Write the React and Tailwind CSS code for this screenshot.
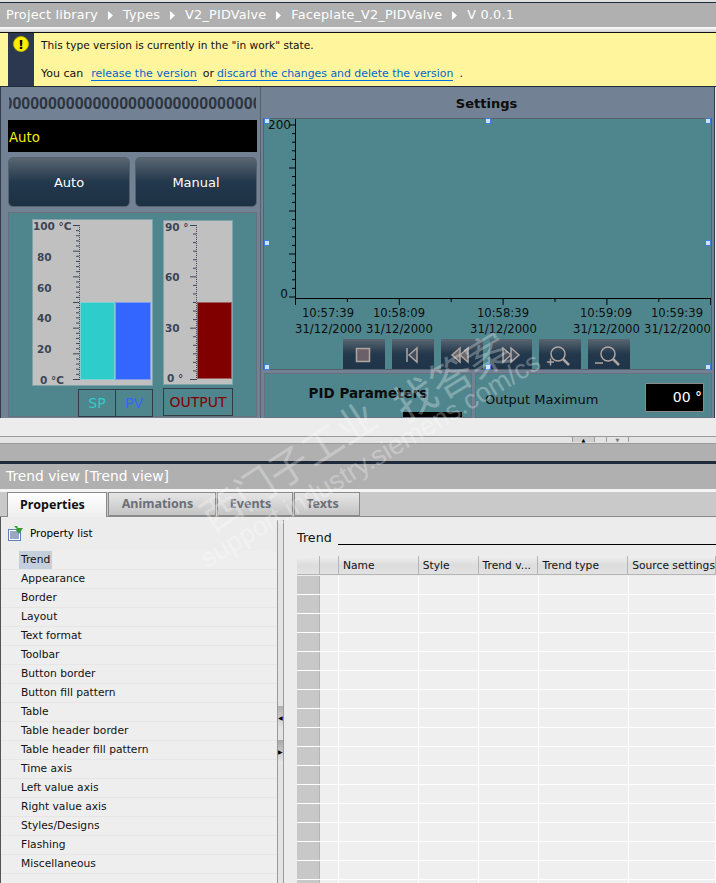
const font = { fontFamily: '"DejaVu Sans", "Noto Sans CJK SC", sans-serif' }

const propertyItems = [
  'Trend',
  'Appearance',
  'Border',
  'Layout',
  'Text format',
  'Toolbar',
  'Button border',
  'Button fill pattern',
  'Table',
  'Table header border',
  'Table header fill pattern',
  'Time axis',
  'Left value axis',
  'Right value axis',
  'Styles/Designs',
  'Flashing',
  'Miscellaneous',
]

const crumbs = ['Project library', 'Types', 'V2_PIDValve', 'Faceplate_V2_PIDValve', 'V 0.0.1']
const tabs = [
  ['Properties', 'w-[100px]'],
  ['Animations', 'w-[108px]'],
  ['Events', 'w-[76px]'],
  ['Texts', 'w-[66px]'],
]
const columns = [
  ['', 'w-[23px]'],
  ['', 'w-[19px]'],
  ['Name', 'w-[80px]'],
  ['Style', 'w-[60px]'],
  ['Trend v...', 'w-[60px]'],
  ['Trend type', 'w-[90px]'],
  ['Source settings', 'flex-1'],
]
const times = [
  ['10:57:39', ''],
  ['10:58:09', 'ml-[5px]'],
  ['10:58:39', 'ml-[38px]'],
  ['10:59:09', 'ml-[37px]'],
  ['10:59:39', 'ml-[5px]'],
]

function Ticks({ height, count, major }) {
  const ticks = []
  for (let i = 0; i <= count; i++) {
    const y = 0.5 + (i * (height - 1)) / count
    ticks.push(
      <line key={i} x1={i % major === 0 ? 0 : 3} x2="6" y1={y} y2={y} stroke="#3a4658" />,
    )
  }
  return (
    <svg width="7" height={height} className="shrink-0">
      <line x1="6.5" x2="6.5" y1="0" y2={height} stroke="#3a4658" strokeDasharray="1 1" />
      {ticks}
    </svg>
  )
}

function ScaleLabels({ labels, className }) {
  return (
    <div className={`flex flex-col items-start justify-between text-[10.5px] leading-[12px] font-bold whitespace-nowrap text-[#3a4658] ${className}`}>
      {labels.map(([l, offset]) => (
        <span key={l} className={offset}>
          {l}
        </span>
      ))}
    </div>
  )
}

function Gauges() {
  return (
    <div className="mt-[5px] h-[205px] border border-[#66707e] bg-[#4f868e] pl-[23px] pt-[6px]">
      <div className="flex gap-[10px]">
        <div className="w-[121px]">
          <div className="flex h-[167px] items-start border border-[#7fa3a8] bg-[#c0c0c0] pt-[5px]">
            <ScaleLabels
              labels={[
                ['100 °C', '-ml-[4px]'],
                ['80', ''],
                ['60', ''],
                ['40', ''],
                ['20', ''],
                ['0 °C', 'ml-[3px]'],
              ]}
              className="-mt-[5px] h-[166px] w-[40px] pl-[4px]"
            />
            <Ticks height={155} count={30} major={5} />
            <div className="mt-[77px] flex">
              <div className="h-[78px] w-[35px] border border-[#7fd0d0] bg-[#2fcccc]" />
              <div className="h-[78px] w-[36px] border border-[#7f9cf0] bg-[#3366ff]" />
            </div>
          </div>
          <div className="ml-[46px] mt-[3px] flex h-[28px] border border-[#333b44] text-[14px] leading-[26px]">
            <span className="w-[37px] border-r border-[#333b44] text-center text-[#2fcccc]">SP</span>
            <span className="flex-1 text-center text-[#3366ff]">PV</span>
          </div>
        </div>
        <div className="w-[70px] pt-[1px]">
          <div className="flex h-[165px] items-start border border-[#7fa3a8] bg-[#c0c0c0] pt-[4px]">
            <ScaleLabels
              labels={[
                ['90 °', ''],
                ['60', ''],
                ['30', ''],
                ['0 °', 'ml-[2px]'],
              ]}
              className="-mt-[4px] h-[163px] w-[26px] pl-[1px]"
            />
            <Ticks height={155} count={18} major={6} />
            <div className="mt-[77px] h-[77px] w-[36px] border border-[#a06060] bg-[#800000]" />
          </div>
          <div className="mt-[3px] h-[28px] border border-[#333b44] text-center text-[14px] leading-[26px] text-[#800000]">
            OUTPUT
          </div>
        </div>
      </div>
    </div>
  )
}

function ToolButton({ children }) {
  return (
    <div className="h-[30px] w-[42px] bg-gradient-to-b from-[#5a6672] via-[#22384c] to-[#1f3448]">
      <svg width="42" height="30" viewBox="0 0 42 30" fill="none" stroke="#b0a5a0" strokeWidth="1.5" className="block">
        {children}
      </svg>
    </div>
  )
}

function TrendView() {
  const xTicks = []
  for (let i = 0; i <= 8; i++) {
    const x = 0.5 + i * 51.9
    xTicks.push(<line key={i} x1={x} x2={x} y1="0" y2={i % 2 === 0 ? 6 : 3} stroke="#000" />)
  }
  const yTicks = []
  for (let i = 0; i <= 20; i++) {
    const y = 6 + i * 8.6
    yTicks.push(<line key={i} x1={i % 5 === 0 ? 0 : 3} x2="6" y1={y} y2={y} stroke="#000" />)
  }
  return (
    <div className="h-[252px] border border-[#56616e] bg-[#4f868e] text-[12px] leading-[16px] text-[#0c0c0c]">
      <div className="flex h-[180px]">
        <div className="-my-[2px] flex w-[25px] flex-col justify-between pl-[4px] text-right">
          <span>200</span>
          <span className="-mb-[1px] pr-[1px]">0</span>
        </div>
        <svg width="7" height="180" className="shrink-0">
          <line x1="6.5" x2="6.5" y1="0" y2="180" stroke="#000" />
          {yTicks}
        </svg>
        <div className="flex-1 border-b border-black" />
      </div>
      <div className="pl-[31px]">
        <svg width="416" height="6" className="block">
          {xTicks}
        </svg>
        <div className="flex text-center text-[11.6px] leading-[16px]">
          {times.map(([t, m]) => (
            <div key={t} className={`w-[66px] shrink-0 ${m}`}>
              {t}
              <br />
              31/12/2000
            </div>
          ))}
        </div>
      </div>
      <div className="mt-[2px] flex justify-center gap-[7px] pr-[2px]">
        <ToolButton>
          <rect x="13.5" y="9.5" width="13" height="13" fill="#6b6068" />
        </ToolButton>
        <ToolButton>
          <path d="M15 9v14M25 9l-8 7 8 7z" fill="#44505e" />
        </ToolButton>
        <ToolButton>
          <path d="M19 9l-8 7 8 7zM27 9l-8 7 8 7z" fill="#6a6a70" />
        </ToolButton>
        <ToolButton>
          <path d="M13 9l8 7-8 7zM21 9l8 7-8 7z" fill="#44505e" />
        </ToolButton>
        <ToolButton>
          <circle cx="19" cy="15" r="7" />
          <path d="M24 20l6 6" strokeWidth="2.5" />
          <path d="M8 23h7M11.5 19.5v7" />
        </ToolButton>
        <ToolButton>
          <circle cx="20" cy="15" r="7" />
          <path d="M25 20l6 6" strokeWidth="2.5" />
          <path d="M7 24h8" />
        </ToolButton>
      </div>
    </div>
  )
}

function Handle({ className }) {
  return <div className={`absolute h-[6px] w-[6px] border border-[#3b7de0] bg-[#cfe2ff] ${className}`} />
}

function Editor() {
  return (
    <div className="mr-[1px] flex h-[331px] border-x border-x-[#333b4a] bg-[#728194]">
      <div className="w-[260px] shrink-0 border-r border-[#56616e] pl-[7px] pr-[3px]">
        <div
          style={{ fontFamily: '"Liberation Sans", sans-serif' }}
          className="mx-[1px] flex h-[33px] items-center justify-center overflow-hidden whitespace-nowrap text-[16px] font-bold text-[#2c3440]"
        >
          <span>000000000000000000000000000000000000000</span>
        </div>
        <div className="h-[32px] bg-black pl-[1px] text-[13.3px] leading-[35px] text-[#f0f000]">Auto</div>
        <div className="mt-[5px] flex gap-[5px]">
          {['Auto', 'Manual'].map((label) => (
            <div
              key={label}
              className="flex h-[50px] flex-1 items-center justify-center rounded-[5px] border border-[#56616e] bg-gradient-to-b from-[#5a6672] via-[#22384c] to-[#1d3144] pt-[1px] text-[13px] text-white"
            >
              {label}
            </div>
          ))}
        </div>
        <Gauges />
      </div>
      <div className="relative flex-1 pl-[2px] pr-[3px]">
        <div className="h-[31px] pr-[2px] text-center text-[13px] leading-[33px] font-bold text-[#0c0c0c]">Settings</div>
        <TrendView />
        <div className="ml-[1px] mt-[3px] flex gap-[3px]">
          <div className="h-[45px] w-[208px] overflow-hidden border border-[#66707e] bg-[#4f868e]">
            <div className="pt-[10px] text-center text-[13.5px] leading-[18px] font-bold text-[#0c0c0c]">PID Parameters</div>
            <div className="ml-[138px] mt-[10px] h-[20px] w-[59px] bg-black" />
          </div>
          <div className="flex h-[45px] flex-1 items-start justify-between border border-[#66707e] bg-[#4f868e] pl-[9px] pr-[7px] pt-[9px]">
            <span className="pt-[8px] text-[13px] leading-[18px] text-[#0c0c0c]">Output Maximum</span>
            <span className="h-[29px] w-[59px] border border-[#8a8a8a] bg-black pr-[1px] text-right text-[14px] leading-[27px] text-white">00 °</span>
          </div>
        </div>
        <Handle className="left-[3px] top-[31px]" />
        <Handle className="left-[224px] top-[31px]" />
        <Handle className="left-[444px] top-[31px]" />
        <Handle className="left-[3px] top-[153px]" />
        <Handle className="left-[444px] top-[153px]" />
        <Handle className="left-[3px] top-[277px]" />
        <Handle className="left-[224px] top-[277px]" />
        <Handle className="left-[444px] top-[277px]" />
      </div>
    </div>
  )
}

function PropertyListIcon() {
  return (
    <svg width="16" height="16" viewBox="0 0 16 16" className="shrink-0">
      <rect x="0.5" y="3.5" width="12" height="11" fill="#fff" stroke="#5f7fb8" />
      <path d="M2 6h9M2 8h9M2 10h9M2 12h9" stroke="#33508a" />
      <path d="M6 0h3l1 2h5l-4 6-4-5h2z" fill="#2f9e3a" />
    </svg>
  )
}

function PropertyList() {
  return (
    <div className="w-[276px] shrink-0 bg-[#eeeeee]">
      <div className="flex h-[34px] items-center gap-[6px] bg-[#ececec] pb-[1px] pl-[7px]">
        <PropertyListIcon />
        <span className="text-[10.4px]">Property list</span>
      </div>
      {propertyItems.map((item, i) => (
        <div key={item} className="flex h-[19px] items-center border-b border-[#e6e6e6] pl-[18px] text-[10.7px] text-[#111]">
          <span className={`px-[2px] leading-[18px] ${i === 0 ? 'bg-[#c3d0dc]' : ''}`}>{item}</span>
        </div>
      ))}
    </div>
  )
}

function Splitter() {
  return (
    <div className="mt-[3px] flex w-[7px] shrink-0 flex-col border-x border-[#9a9a9a] bg-[#e4e4e4] pt-[186px]">
      <div className="flex h-[23px] items-center bg-gradient-to-b from-[#b0b0b0] to-[#e8e8e8] text-[6px] leading-none text-black">◀</div>
      <div className="mt-[11px] flex h-[23px] items-center bg-gradient-to-b from-[#a8a8a8] to-[#e8e8e8] text-[6px] leading-none text-black">▶</div>
    </div>
  )
}

function TrendTable() {
  return (
    <div className="min-w-0 flex-1 pl-[13px] pt-[13px]">
      <div className="flex items-end gap-[6px]">
        <span className="text-[12.7px] leading-[16px] text-[#111]">Trend</span>
        <div className="mb-[1px] flex-1 border-b border-black" />
      </div>
      <div className="mb-[1px] mt-[10px] flex h-[19px] border-b border-[#b5b5b5] bg-gradient-to-b from-[#f0f0f0] via-[#dcdcdc] to-[#e2e2e2]">
        {columns.map(([name, w], i) => (
          <div key={i} className={`${w} border-r border-[#b5b5b5] pl-[4px] text-[10.7px] leading-[19px] whitespace-nowrap text-[#111]`}>
            {name}
          </div>
        ))}
      </div>
      {Array.from({ length: 17 }).map((_, r) => (
        <div key={r} className="flex h-[19px] border-b border-white">
          {columns.map(([name, w], i) => (
            <div key={i} className={`${w} border-r ${i === 0 ? 'border-[#b5b5b5] bg-[#c8c8c8]' : 'border-white bg-[#efefef]'}`} />
          ))}
        </div>
      ))}
    </div>
  )
}

function Watermark() {
  return (
    <div className="pointer-events-none absolute left-[185px] top-[335px] h-[240px] w-[380px] text-white/30">
      <div className="absolute left-[4px] top-[112px] -rotate-[33deg] whitespace-nowrap text-[40px] leading-none">西门子工业</div>
      <div className="absolute left-[204px] top-[22px] -rotate-[31deg] whitespace-nowrap text-[42px] leading-none">找答案</div>
      <div style={{ fontFamily: '"Liberation Sans", sans-serif' }} className="absolute left-[-10px] top-[112px] -rotate-[31deg] whitespace-nowrap text-[27px] leading-none">
        support.industry.siemens.com/cs
      </div>
    </div>
  )
}

export default function App() {
  return (
    <div style={font} className="relative h-[883px] w-[716px] overflow-hidden bg-[#ececec]">
      <div className="h-[3px] border-b border-[#1f2a3a] bg-[#e0e0e0]" />
      <div className="flex h-[24px] items-center bg-[#b0b0b0] pl-[6px] text-[12.8px] tracking-[0.2px] text-white">
        {crumbs.map((c, i) => (
          <span key={c} className="flex items-center">
            {i > 0 && (
              <svg width="5" height="9" viewBox="0 0 5 9" className="mx-[10px]">
                <path d="M0 0l5 4.5L0 9z" fill="#fff" />
              </svg>
            )}
            {c}
          </span>
        ))}
      </div>
      <div className="h-[6px] border-b border-[#111] bg-gradient-to-b from-white to-[#cfcfcf]" />
      <div className="flex h-[54px] border-b border-[#1f2a3a] bg-[#fff59d] pl-[2px] text-[#111]">
        <div className="ml-[6px] flex w-[26px] shrink-0 justify-center bg-[#2b3850] pt-[3px]">
          <div className="flex h-[16px] w-[16px] items-center justify-center rounded-full border border-[#b8b000] bg-[#ffee00] text-[13px] leading-none font-bold text-black">!</div>
        </div>
        <div className="pl-[7px] pt-[4px] text-[11px]">
          <div className="text-[10.6px] leading-[16px]">This type version is currently in the "in work" state.</div>
          <div className="mt-[13px] leading-[16px]">
            You can
            <span className="ml-[8px] border-b border-[#0070d8] text-[#0066cc]">release the version</span>
            <span className="ml-[6px]">or</span>
            <span className="ml-[3px] border-b border-[#0070d8] text-[10.9px] text-[#0066cc]">discard the changes and delete the version</span>
            <span className="ml-[6px]">.</span>
          </div>
        </div>
      </div>
      <Editor />
      <div className="h-[18px] bg-[#ececec]" />
      <div className="flex h-[8px] items-start justify-start border-y border-[#9a9a9a] bg-[#e4e4e4] pl-[572px] text-[5px] leading-[6px]">
        <div className="h-[5px] w-[23px] border-x border-[#9a9a9a] bg-[#d0d0d0] text-center">▲</div>
        <div className="ml-[11px] h-[5px] w-[23px] border-x border-[#9a9a9a] text-center text-[#777]">▼</div>
      </div>
      <div className="h-[17px] bg-[#b0b0b0]" />
      <div className="h-[3px] bg-[#1f2a3a]" />
      <div className="flex h-[25px] items-center bg-[#b0b0b0] pl-[6px] text-[13.8px] text-white">Trend view [Trend view]</div>
      <div className="h-[3px] bg-[#f4f4f4]" />
      <div style={{ fontFamily: '"Noto Sans", sans-serif' }} className="flex h-[25px] gap-[1px] border-b border-[#8a8a8a] bg-[#c9c9c9] pl-[7px]">
        {tabs.map(([t, w], i) => (
          <div
            key={t}
            className={`${w} flex items-center justify-center border border-[#8a8a8a] pr-[9px] text-[12.5px] font-bold ${
              i === 0 ? 'h-[25px] border-b-0 bg-gradient-to-b from-white to-[#eeeeee] text-[#111]' : 'h-[24px] bg-gradient-to-b from-[#e6e6e6] to-[#c4c4c4] text-[#6a6f78]'
            }`}
          >
            {t}
          </div>
        ))}
      </div>
      <div className="flex h-[367px] border-l border-[#555]">
        <PropertyList />
        <Splitter />
        <TrendTable />
      </div>
      <Watermark />
    </div>
  )
}
